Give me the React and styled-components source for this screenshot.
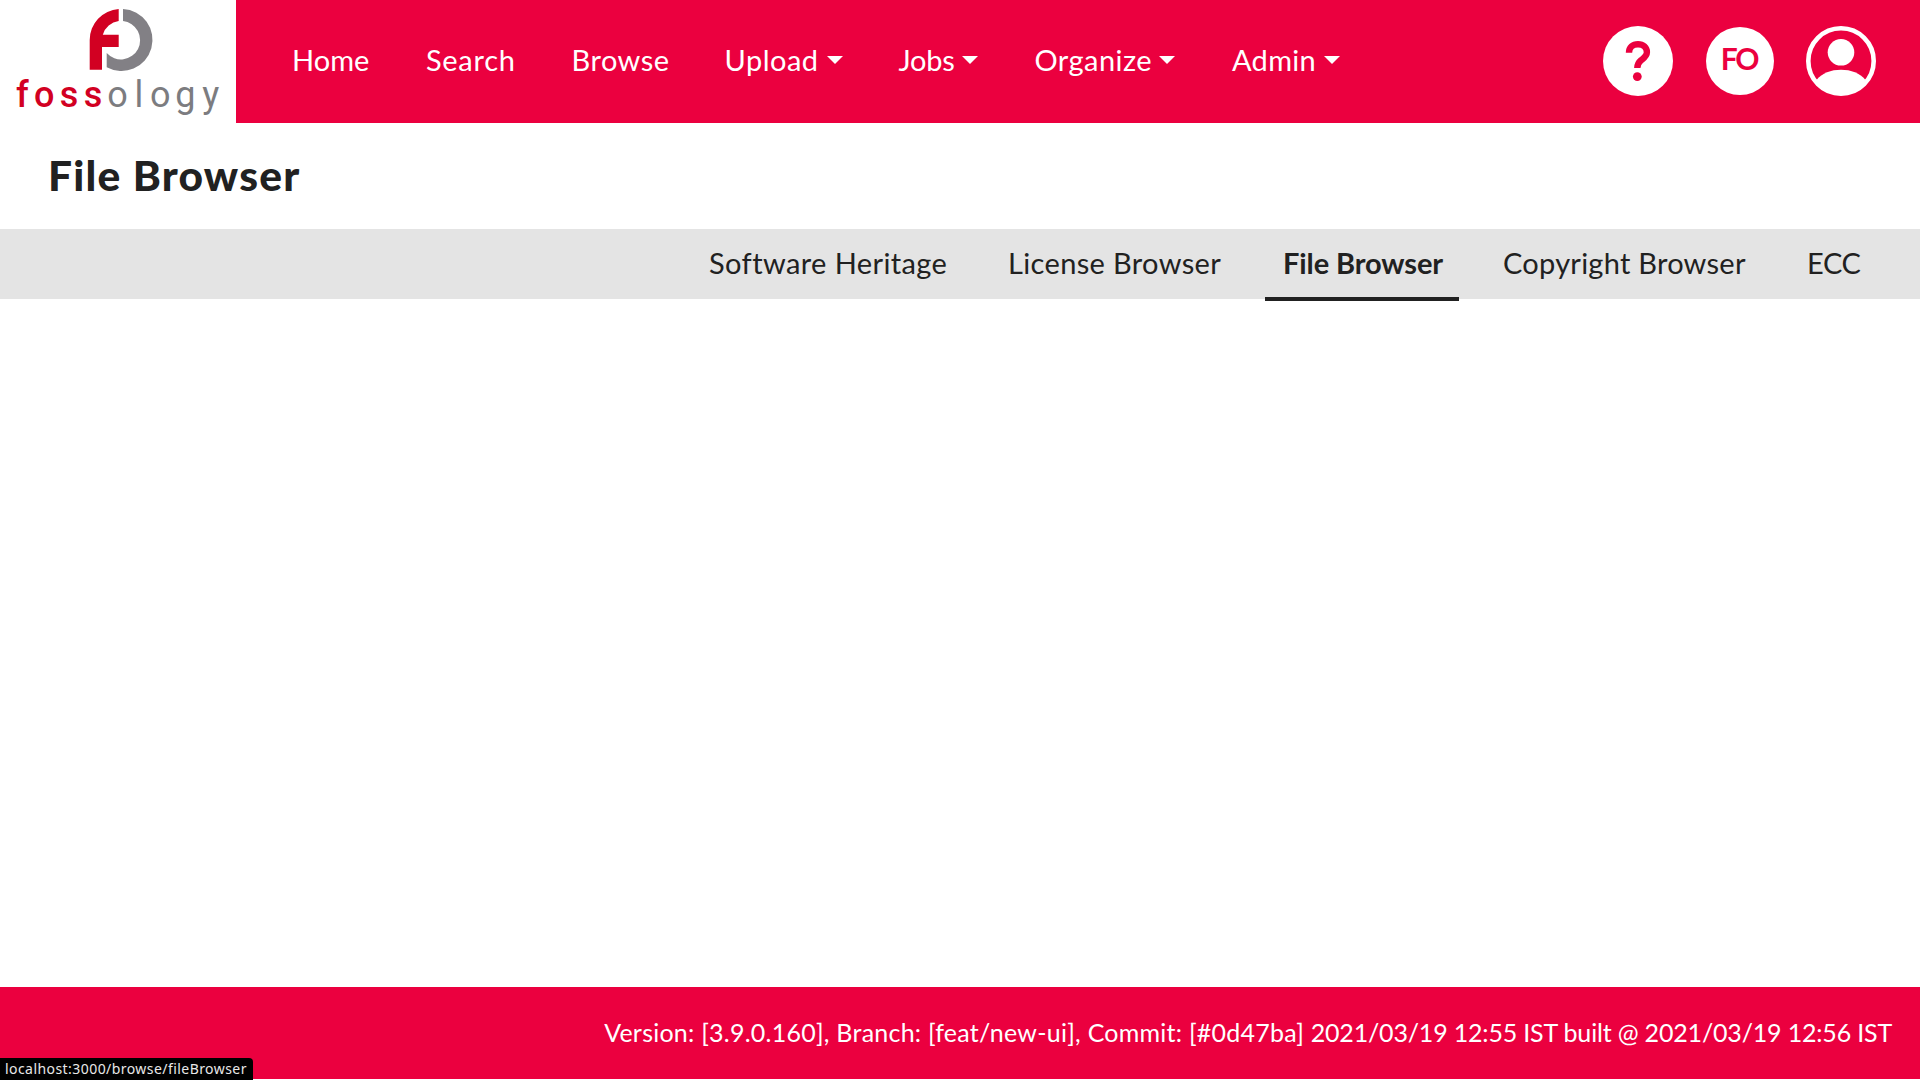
import React from "react";
import styled, { createGlobalStyle } from "styled-components";

const RED = "#eb003f";
const INK = "#212121";

const GlobalStyle = createGlobalStyle`
  * { box-sizing: border-box; }
  body {
    margin: 0;
    background: #fff;
    color: ${INK};
    font-family: Lato, "Open Sans", sans-serif;
    font-variant-ligatures: none;
    overflow: hidden;
  }
`;

const Page = styled.div`
  display: flex;
  flex-direction: column;
  width: 100%;
  height: 1080px;
  position: relative;
`;

const Header = styled.header`
  display: flex;
  height: 123px;
  background: ${RED};
`;

const Brand = styled.a`
  width: 236px;
  height: 123px;
  background: #fff;
  svg { display: block; }
`;

const Nav = styled.nav`
  display: flex;
  align-items: flex-start;
  padding: 42px 0 0 56px;
  flex: 1;
`;

const NavItem = styled.a`
  display: flex;
  width: ${(p) => p.$width}px;
  color: #fff;
  font-size: 29px;
  line-height: 36px;
  letter-spacing: ${(p) => p.$spacing}px;
  white-space: nowrap;
`;

const NavLabel = styled.span`
  width: ${(p) => (p.$width ? `${p.$width}px` : "auto")};
`;

const Caret = styled.span`
  width: 0;
  height: 0;
  margin-top: 14px;
  border-top: 8.4px solid #fff;
  border-left: 8.4px solid transparent;
  border-right: 8.4px solid transparent;
`;

const Actions = styled.div`
  display: flex;
  align-items: center;
  padding: 0 44px 1px 0;
  svg { display: block; }
`;

const Group = styled.div`
  display: flex;
  align-items: center;
  justify-content: center;
  width: 68px;
  height: 68px;
  margin: 0 32px 0 33px;
  padding: 0 2px 6px 0;
  border-radius: 50%;
  background: #fff;
  color: ${RED};
  font-size: 30px;
  font-weight: 700;
  letter-spacing: -2.2px;
`;

const TitleBar = styled.div`
  height: 106px;
  padding: 26px 0 0 48px;
`;

const Title = styled.h1`
  margin: 0;
  font-size: 42.5px;
  line-height: 52px;
  font-weight: 900;
  letter-spacing: 1.2px;
`;

const Tabs = styled.nav`
  display: flex;
  justify-content: flex-end;
  gap: 26px;
  height: 70px;
  padding-right: 42px;
  background: #e4e4e4;
`;

const Tab = styled.a`
  width: ${(p) => p.$width}px;
  height: 72px;
  padding: 16px 0 0 18px;
  border-bottom: 4px solid ${(p) => (p.$active ? INK : "transparent")};
  font-size: 29px;
  line-height: 36px;
  font-weight: ${(p) => (p.$active ? 700 : 400)};
  letter-spacing: ${(p) => p.$spacing}px;
  white-space: nowrap;
`;

const Content = styled.main`
  flex: 1;
`;

const Footer = styled.footer`
  display: flex;
  justify-content: flex-end;
  height: 92px;
  margin-bottom: 1px;
  padding: 29px 28px 0 0;
  background: ${RED};
  color: #fff;
  font-size: 25px;
  line-height: 32px;
  white-space: pre;
`;

const FooterText = styled.span`
  letter-spacing: ${(p) => p.$spacing}px;
`;

const StatusBubble = styled.div`
  position: absolute;
  left: 0;
  bottom: 0;
  width: 253px;
  height: 22px;
  padding-left: 5px;
  border-top-right-radius: 4px;
  background: #000;
  color: #e8e8e8;
  font-family: "Noto Sans", sans-serif;
  font-size: 14px;
  line-height: 21px;
  letter-spacing: 0.44px;
  white-space: nowrap;
`;

const Wordmark = styled.text`
  font-family: Roboto, sans-serif;
  font-size: 36px;
  font-weight: ${(p) => p.$weight};
`;

const navItems = [
  { label: "Home", width: 134, spacing: 0 },
  { label: "Search", width: 145.5, spacing: 0.7 },
  { label: "Browse", width: 153, spacing: 0.5 },
  { label: "Upload", width: 174, spacing: 0.5, menu: 102 },
  { label: "Jobs", width: 136, spacing: -0.2, menu: 63.5 },
  { label: "Organize", width: 197.5, spacing: 0.45, menu: 124.5 },
  { label: "Admin", width: 110, spacing: 0.3, menu: 92 },
];

const tabs = [
  { label: "Software Heritage", width: 273, spacing: 0.4 },
  { label: "License Browser", width: 249, spacing: 0.35 },
  { label: "File Browser", width: 194, spacing: -0.1, active: true },
  { label: "Copyright Browser", width: 278, spacing: 0.25 },
  { label: "ECC", width: 89, spacing: -0.4 },
];

function Logo() {
  return (
    <svg width="236" height="123" viewBox="0 0 236 123">
      <path
        fill="#d20022"
        d="M118.7 9A31 31 0 0 0 89.7 40V69.7H102V47H118.7V34.7H102.8A19 19 0 0 1 118.7 21.1Z"
      />
      <path
        fill="#828085"
        d="M123 9A31 31 0 1 1 106.7 67.2V53.1A19.2 19.2 0 1 0 123 21.1Z"
      />
      <Wordmark $weight={500} fill="#d20022" x="16 33.9 59.8 83.8" y="107">foss</Wordmark>
      <Wordmark $weight={400} fill="#7c7c80" x="107.3 134.6 150 175.3 202.2" y="107">ology</Wordmark>
    </svg>
  );
}

function HelpIcon() {
  return (
    <svg width="70" height="70" viewBox="0 0 70 70" fill="none">
      <circle cx="35" cy="35" r="35" fill="#fff" />
      <path
        d="M26 26.7C26 21.3 29.8 18.2 35 18.2S43.9 21.6 43.9 26.2C43.9 30 41 31.8 38 34.3C35.3 36.6 34.3 38.3 34.3 42"
        stroke={RED}
        strokeWidth="6.4"
      />
      <circle cx="34.3" cy="50.6" r="4.4" fill={RED} />
    </svg>
  );
}

function UserIcon() {
  return (
    <svg width="70" height="70" viewBox="0 0 70 70" fill="none">
      <circle cx="35" cy="35" r="32.7" stroke="#fff" strokeWidth="4.6" />
      <circle cx="35" cy="26.3" r="13.3" fill="#fff" />
      <path d="M10.5 54C16 47 25 43.8 35 43.8S54 47 59.5 54A31 31 0 0 1 35 69A31 31 0 0 1 10.5 54Z" fill="#fff" />
    </svg>
  );
}

export default function App() {
  return (
    <Page>
      <GlobalStyle />
      <Header>
        <Brand><Logo /></Brand>
        <Nav>
          {navItems.map((item) => (
            <NavItem key={item.label} $width={item.width} $spacing={item.spacing}>
              <NavLabel $width={item.menu}>{item.label}</NavLabel>
              {item.menu && <Caret />}
            </NavItem>
          ))}
        </Nav>
        <Actions>
          <HelpIcon />
          <Group>FO</Group>
          <UserIcon />
        </Actions>
      </Header>
      <TitleBar>
        <Title>File Browser</Title>
      </TitleBar>
      <Tabs>
        {tabs.map((tab) => (
          <Tab key={tab.label} $width={tab.width} $spacing={tab.spacing} $active={tab.active}>
            {tab.label}
          </Tab>
        ))}
      </Tabs>
      <Content />
      <Footer>
        <FooterText $spacing={0.24}>{"Version: [3.9.0.160], Branch: [feat/new-ui], Commit: [#0d47ba] "}</FooterText>
        <FooterText $spacing={-0.18}>{"2021/03/19 12:55 IST built @ 2021/03/19 12:56 IST"}</FooterText>
      </Footer>
      <StatusBubble>localhost:3000/browse/fileBrowser</StatusBubble>
    </Page>
  );
}
